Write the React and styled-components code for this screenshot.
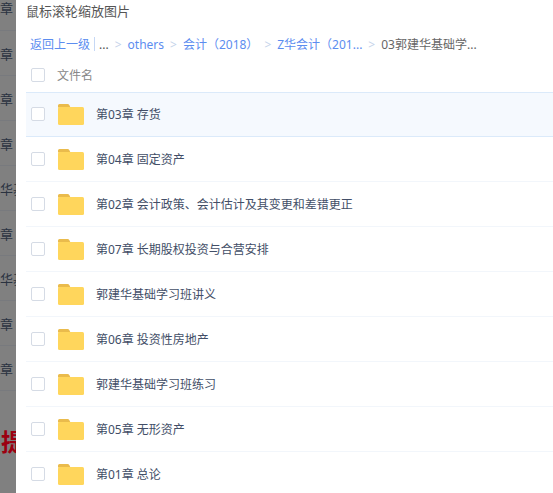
import React from "react";
import styled, { createGlobalStyle } from "styled-components";

const Global = createGlobalStyle`
  html, body { margin: 0; padding: 0; background: #fff; }
  body { font-family: "Noto Sans", "Noto Sans CJK SC", sans-serif; }
  * { box-sizing: border-box; }
`;

const Page = styled.div`
  width: 553px;
  height: 493px;
  display: flex;
  overflow: hidden;
`;

const Backdrop = styled.div`
  width: 16px;
  flex-shrink: 0;
  background: #808080;
  overflow: hidden;
`;

const BackRow = styled.div`
  height: 45px;
  display: flex;
  align-items: center;
  font-size: 13px;
  color: #2a3240;
  white-space: nowrap;
  border-bottom: 1px solid #787a7e;
  &:first-child {
    height: 31px;
    padding-bottom: 15px;
  }
`;

const BigText = styled.div`
  margin-top: 36px;
  padding-left: 1px;
  height: 30px;
  line-height: 30px;
  font-size: 24px;
  font-weight: bold;
  color: #9c0010;
  white-space: nowrap;
`;

const Panel = styled.div`
  flex: 1;
  padding-left: 10px;
  background: #fff;
`;

const Title = styled.div`
  height: 24px;
  line-height: 22px;
  font-size: 13px;
  color: #555;
`;

const Crumbs = styled.div`
  margin-top: 8px;
  height: 24px;
  display: flex;
  align-items: center;
  padding-left: 4px;
  font-size: 12px;
  white-space: nowrap;
`;

const Crumb = styled.span`
  color: ${(p) => (p.$current ? "#666" : "#5c8df0")};
`;

const Sep = styled.span`
  color: #c5d3ea;
  margin: 0 6px;
`;

const Bar = styled.span`
  width: 1px;
  height: 14px;
  background: #c6d8f5;
  margin: 0 4px;
`;

const Dots = styled.span`
  color: #555;
`;

const HeadRow = styled.div`
  height: 36px;
  display: flex;
  align-items: center;
  padding: 2px 0 0 5px;
`;

const Box = styled.span`
  width: 14px;
  height: 14px;
  border: 1px solid #d5dbe5;
  border-radius: 2px;
  background: #fff;
  flex-shrink: 0;
`;

const HeadLabel = styled.span`
  margin-left: 12px;
  font-size: 12px;
  color: #888;
`;

const Row = styled.div`
  height: 45px;
  display: flex;
  align-items: center;
  padding-left: 5px;
  padding-bottom: ${(p) => (p.$active ? "1px" : "0")};
  border-bottom: 1px solid ${(p) => (p.$active ? "#dbeafa" : "#f2f6fb")};
  border-top: ${(p) => (p.$active ? "1px solid #dbeafa" : "none")};
  background: ${(p) => (p.$active ? "#f5f9fe" : "#fff")};
`;

const FolderWrap = styled.span`
  margin-left: 13px;
  width: 26px;
  height: 22px;
  flex-shrink: 0;
  display: flex;
`;

const Name = styled.span`
  margin-left: 12px;
  font-size: 12px;
  color: #424e67;
  white-space: nowrap;
`;

const Folder = () => (
  <FolderWrap>
    <svg width="26" height="22" viewBox="0 0 26 22">
      <path d="M0 2.500a1.500 1.500 0 0 1 1.500-1.500h8a2 2 0 0 1 1.800 1l1.200 2.500H0z" fill="#eabb4c" />
      <rect x="0" y="4" width="26" height="18" rx="1.500" fill="#ffd65c" />
    </svg>
  </FolderWrap>
);

const files = [
  "第03章 存货",
  "第04章 固定资产",
  "第02章 会计政策、会计估计及其变更和差错更正",
  "第07章 长期股权投资与合营安排",
  "郭建华基础学习班讲义",
  "第06章 投资性房地产",
  "郭建华基础学习班练习",
  "第05章 无形资产",
  "第01章 总论",
];

const backRows = ["章", "章", "章", "章", "华基", "章", "华基", "章", "章"];

export default function App() {
  return (
    <Page>
      <Global />
      <Backdrop>
        {backRows.map((t, i) => (
          <BackRow key={i}>{t}</BackRow>
        ))}
        <BigText>提</BigText>
      </Backdrop>
      <Panel>
        <Title>鼠标滚轮缩放图片</Title>
        <Crumbs>
          <Crumb>返回上一级</Crumb>
          <Bar />
          <Dots>...</Dots>
          <Sep>&gt;</Sep>
          <Crumb>others</Crumb>
          <Sep>&gt;</Sep>
          <Crumb>会计（2018）</Crumb>
          <Sep>&gt;</Sep>
          <Crumb>Z华会计（201...</Crumb>
          <Sep>&gt;</Sep>
          <Crumb $current>03郭建华基础学...</Crumb>
        </Crumbs>
        <HeadRow>
          <Box />
          <HeadLabel>文件名</HeadLabel>
        </HeadRow>
        {files.map((f, i) => (
          <Row key={f} $active={i === 0}>
            <Box />
            <Folder />
            <Name>{f}</Name>
          </Row>
        ))}
      </Panel>
    </Page>
  );
}
